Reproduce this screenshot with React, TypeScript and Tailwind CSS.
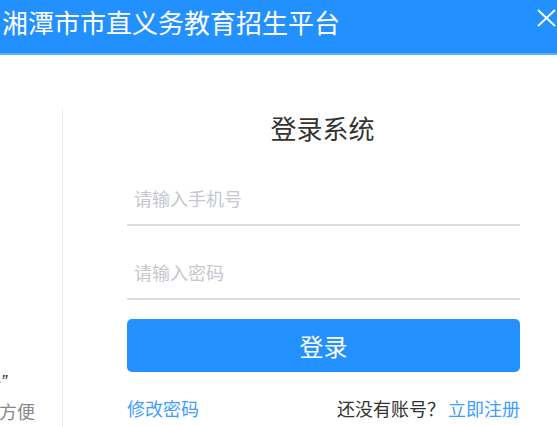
import { useState } from "react";

const font = { fontFamily: '"Noto Sans CJK SC", "Noto Sans", sans-serif' };

export default function App() {
  const [phone, setPhone] = useState("");
  const [password, setPassword] = useState("");

  return (
    <div className="w-[557px] h-[426px] overflow-hidden bg-white" style={font}>
      {/* header */}
      <div className="h-[55px] bg-[#2291ff] border-b-2 border-[#5eb0ff] flex items-start justify-between pl-[2px] pr-0 pt-[7px]">
        <h1 className="text-white text-[26px] leading-[30px] tracking-[0px]">湘潭市市直义务教育招生平台</h1>
        <button className="text-white w-[20px] h-[20px] flex items-center justify-start mt-[1px]">
          <svg width="19" height="18" viewBox="0 0 19 18" fill="none" stroke="currentColor" strokeWidth="1.8">
            <path d="M1 1L18 17M18 1L1 17" />
          </svg>
        </button>
      </div>

      <div className="flex">
        {/* left intro, cut off */}
        <div className="w-[63px] shrink-0 flex flex-col">
          <div className="h-[52px]" />
          <div className="border-r border-[#eeeeee] h-[319px] flex flex-col justify-end pb-0 overflow-hidden">
            <div className="flex justify-end mr-[55px] whitespace-nowrap text-[18px] leading-[29px] text-[#333]">
              点击“立即注册<span style={{ fontFamily: '"Liberation Sans", sans-serif' }} className="italic">”</span>
            </div>
            <div className="flex justify-end mr-[27px] whitespace-nowrap text-[18px] leading-[29px] text-[#888]">
              注册账号方便
            </div>
          </div>
        </div>

        {/* login form */}
        <div className="ml-[64px] w-[393px] flex flex-col pt-[55px]">
          <h2 className="text-center text-[26px] leading-[36px] text-[#333] ml-[-2px]">登录系统</h2>

          <input
            value={phone}
            onChange={(e) => setPhone(e.target.value)}
            placeholder="请输入手机号"
            className="mt-[31px] h-[49px] pl-[7px] pb-[5px] text-[18px] text-[#333] border-b-2 border-[#dcdcdc] outline-none placeholder:text-[#c5c8ce]"
          />
          <input
            type="password"
            value={password}
            onChange={(e) => setPassword(e.target.value)}
            placeholder="请输入密码"
            className="mt-[25px] h-[49px] pl-[7px] pb-[5px] text-[18px] text-[#333] border-b-2 border-[#dcdcdc] outline-none placeholder:text-[#c5c8ce]"
          />

          <button className="mt-[19px] h-[53px] rounded-[5px] bg-[#2391ff] text-white text-[24px]">登录</button>

          <div className="mt-[23px] flex justify-between text-[18px] leading-[26px]">
            <a className="text-[#409eff]">修改密码</a>
            <span className="text-[#333]">
              还没有账号？<a className="text-[#409eff] ml-[3px]">立即注册</a>
            </span>
          </div>
        </div>
      </div>
    </div>
  );
}
